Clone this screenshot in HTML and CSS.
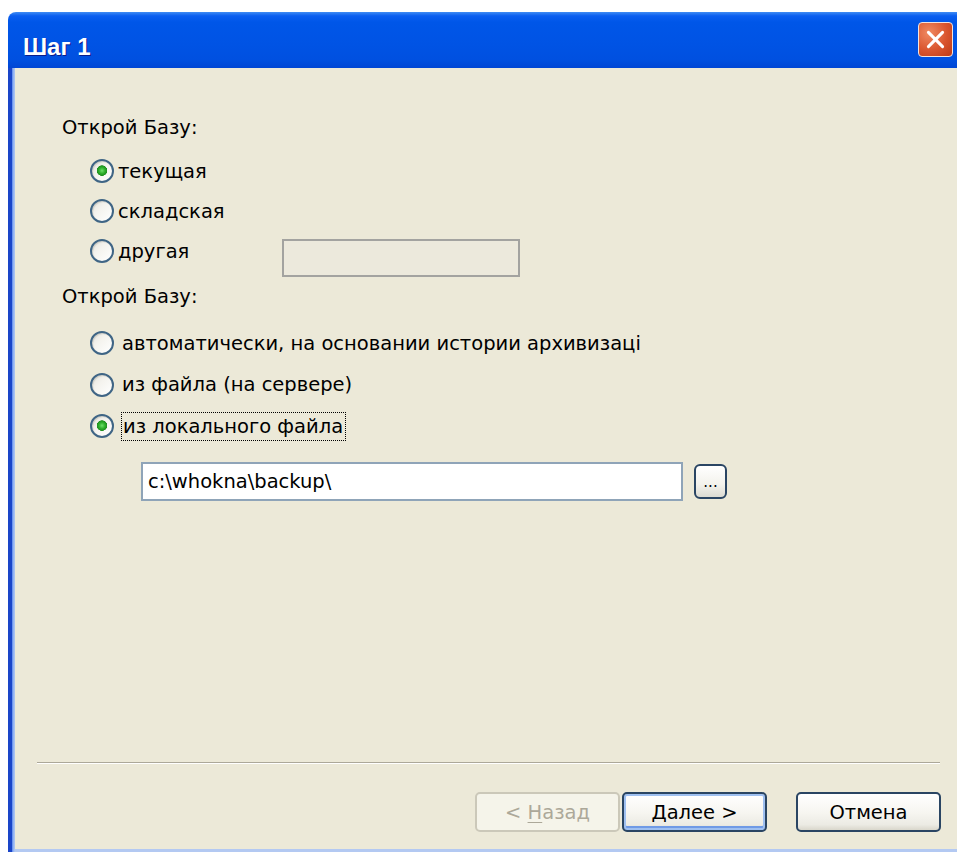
FILE: index.html
```html
<!DOCTYPE html>
<html lang="ru">
<head>
<meta charset="utf-8">
<title>Шаг 1</title>
<link rel="stylesheet" href="styles.css">
</head>
<body>
<div class="window">
  <div class="titlebar">
    <span class="title">Шаг 1</span>
    <span class="close" aria-label="Закрыть">
      <svg viewBox="0 0 35 35" width="35" height="35">
        <path d="M10 10 L25 25 M25 10 L10 25" stroke="#fff" stroke-width="3.2" stroke-linecap="round"/>
      </svg>
    </span>
  </div>
  <div class="frame">
    <div class="client">
      <div class="content">
        <div class="group-label">Открой Базу:</div>
        <div class="options">
          <div class="opt"><span class="radio checked"></span><span class="opt-text">текущая</span></div>
          <div class="opt"><span class="radio"></span><span class="opt-text">складская</span></div>
          <div class="opt"><span class="radio"></span><span class="opt-text fixed">другая</span><span class="field-disabled"></span></div>
        </div>
        <div class="group-label second">Открой Базу:</div>
        <div class="options wide">
          <div class="opt"><span class="radio"></span><span class="opt-text">автоматически, на основании истории архивизаці</span></div>
          <div class="opt"><span class="radio"></span><span class="opt-text">из файла (на сервере)</span></div>
          <div class="opt"><span class="radio checked"></span><span class="opt-text focus">из локального файла</span></div>
        </div>
        <div class="path-row">
          <div class="edit">c:\whokna\backup\</div>
          <button class="browse" type="button"><span>...</span></button>
        </div>
      </div>
      <div class="footer">
        <div class="separator"></div>
        <div class="buttons">
          <button class="btn disabled" type="button">&lt; <u>Н</u>азад</button>
          <button class="btn default" type="button"><u>Д</u>алее &gt;</button>
          <button class="btn cancel" type="button">Отмена</button>
        </div>
      </div>
    </div>
  </div>
</div>
</body>
</html>
```
FILE: styles.css
```css
html, body {
  margin: 0;
  height: 100%;
  overflow: hidden;
  background: #fff;
}

body {
  font-family: "DejaVu Sans", Verdana, sans-serif;
  font-size: 19.5px;
  color: #000;
}

.window {
  margin: 12px 0 0 8px;
  width: 960px;
}

/* Luna title bar */
.titlebar {
  height: 56px;
  box-sizing: border-box;
  border-radius: 8px 8px 0 0;
  background: linear-gradient(#3f8cf3 0, #0a5ef0 7%, #0056e8 18%, #0053e4 60%, #0050e0 85%, #0046d4 100%);
  display: flex;
  align-items: flex-start;
  justify-content: space-between;
  padding: 10px 15px 0 15px;
}

.title {
  margin-top: 13px;
  font: bold 24px/24px "Liberation Sans", Arial, sans-serif;
  color: #fff;
  text-shadow: 1px 1px 0 #0a1d8c;
}

.close {
  width: 35px;
  height: 35px;
  box-sizing: border-box;
  border: 1px solid #f3e3dd;
  border-radius: 4px;
  background: radial-gradient(circle at 30% 30%, #f08a62, #d9552e 55%, #bd3a16);
  display: flex;
  align-items: center;
  justify-content: center;
}

.close svg {
  display: block;
}

/* window frame: left edge and bottom edge */
.frame {
  height: 784px;
  padding-left: 7px;
  background: linear-gradient(to right, #1a45c8 0, #1a45c8 4px, #5b88ee 4px, #a8c2f3 6px, #a8c2f3 7px);
}

.client {
  height: 781px;
  background: #ece9d8;
  display: flex;
  flex-direction: column;
  border-bottom: 3px solid #b3c9f2;
}

.content {
  flex: 1;
  padding: 38.5px 0 0 47px;
}

.group-label {
  height: 41px;
  line-height: 41px;
}

.group-label.second {
  margin-top: 4.5px;
}

.options {
  padding-left: 28px;
  margin-top: 3.5px;
}

.options.wide {
  margin-top: 5.75px;
}

.opt {
  height: 40px;
  display: flex;
  align-items: center;
  gap: 4px;
}

.options.wide .opt {
  height: 41.5px;
  gap: 8px;
}

/* XP radio button */
.radio {
  width: 24px;
  height: 24px;
  box-sizing: border-box;
  flex: none;
  border-radius: 50%;
  border: 2px solid #3f6585;
  background: linear-gradient(135deg, #e4e3dd 0%, #f4f3ee 40%, #ffffff 100%);
  box-shadow: inset 1px 1px 1px #d0cfc6;
}

.radio.checked {
  background:
    radial-gradient(circle at 50% 48%, #6fe06a 0, #2fb02c 3px, #1f8f1f 5px, transparent 5.5px),
    linear-gradient(135deg, #e4e3dd 0%, #f4f3ee 40%, #ffffff 100%);
}

.opt-text {
  white-space: nowrap;
}

.opt-text.fixed {
  width: 160px;
}

.opt-text.focus {
  outline: 1px dotted #000;
  outline-offset: 0;
  padding: 2px 2px 2px 1px;
}

.field-disabled {
  width: 238px;
  height: 38px;
  box-sizing: border-box;
  border: 2px solid #a3a3a0;
  background: #ece9dc;
  margin-top: 14px;
}

.path-row {
  display: flex;
  align-items: center;
  gap: 11px;
  margin: 15.25px 0 0 79px;
}

.edit {
  width: 542px;
  height: 39px;
  box-sizing: border-box;
  border: 2px solid #8fa4b8;
  background: #fff;
  padding: 0 0 0 5px;
  line-height: 35px;
}

.browse {
  width: 33px;
  height: 35px;
  padding: 0;
  border: 2px solid #2a4563;
  border-radius: 6px;
  background: linear-gradient(#ffffff, #f3f2ec 60%, #dcdbd2);
  font: 15px "DejaVu Sans", Verdana, sans-serif;
  color: #000;
  display: flex;
  align-items: flex-end;
  justify-content: center;
  line-height: 1;
}

.browse span {
  padding-bottom: 7px;
}

.footer {
  padding-bottom: 17px;
}

.separator {
  margin-left: 22px;
  width: 903px;
  height: 1px;
  background: #aca899;
  border-bottom: 1px solid #fff;
}

.buttons {
  margin-top: 28px;
  display: flex;
  justify-content: flex-end;
  padding-right: 27px;
}

.btn {
  width: 145px;
  height: 40px;
  padding: 0;
  border: 2px solid #2a4563;
  border-radius: 5px;
  background: linear-gradient(#ffffff, #f7f6f1 50%, #ecebe4 85%, #d9d7cc);
  font: 19.5px "DejaVu Sans", Verdana, sans-serif;
  color: #000;
}

.btn u {
  text-decoration-thickness: 1px;
  text-underline-offset: 3px;
}

.btn.disabled {
  border-color: #cbc8b9;
  background: #f5f4ea;
  color: #aca899;
}

.btn.default {
  margin-left: 2px;
  box-shadow: inset 0 0 0 2px #9fc0f0, inset 0 -3px 0 1px #6f9ae6;
}

.btn.cancel {
  margin-left: 29px;
}
```
